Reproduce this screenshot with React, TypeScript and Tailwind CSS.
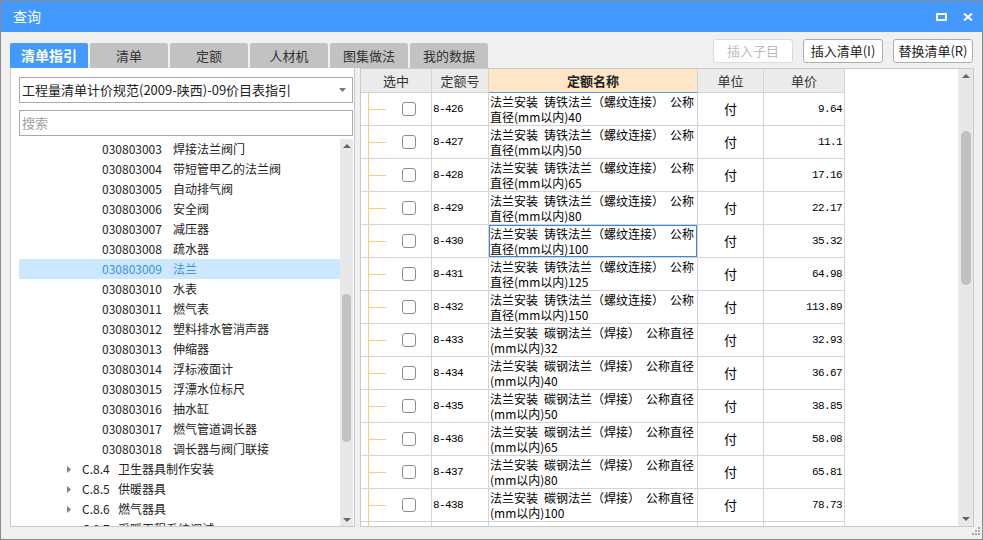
import React from 'react'

interface TreeItem {
  code: string
  name: string
  chapter?: boolean
  selected?: boolean
}

interface Quota {
  no: string
  line1: string
  line2: string
  price: string
  active?: boolean
}

const treeItems: TreeItem[] = [
  { code: '030803003', name: '焊接法兰阀门' },
  { code: '030803004', name: '带短管甲乙的法兰阀' },
  { code: '030803005', name: '自动排气阀' },
  { code: '030803006', name: '安全阀' },
  { code: '030803007', name: '减压器' },
  { code: '030803008', name: '疏水器' },
  { code: '030803009', name: '法兰', selected: true },
  { code: '030803010', name: '水表' },
  { code: '030803011', name: '燃气表' },
  { code: '030803012', name: '塑料排水管消声器' },
  { code: '030803013', name: '伸缩器' },
  { code: '030803014', name: '浮标液面计' },
  { code: '030803015', name: '浮漂水位标尺' },
  { code: '030803016', name: '抽水缸' },
  { code: '030803017', name: '燃气管道调长器' },
  { code: '030803018', name: '调长器与阀门联接' },
  { code: 'C.8.4', name: '卫生器具制作安装', chapter: true },
  { code: 'C.8.5', name: '供暖器具', chapter: true },
  { code: 'C.8.6', name: '燃气器具', chapter: true },
  { code: 'C.8.7', name: '采暖工程系统调试', chapter: true },
]

// en spaces keep the gaps as wide as the half-width blanks of the original
const castIron = '法兰安装\u2002铸铁法兰（螺纹连接）\u2002公称'
const carbon = '法兰安装\u2002碳钢法兰（焊接）\u2002公称直径'

const quotas: Quota[] = [
  { no: '8-426', line1: castIron, line2: '直径(mm以内)40', price: '9.64' },
  { no: '8-427', line1: castIron, line2: '直径(mm以内)50', price: '11.1' },
  { no: '8-428', line1: castIron, line2: '直径(mm以内)65', price: '17.16' },
  { no: '8-429', line1: castIron, line2: '直径(mm以内)80', price: '22.17' },
  { no: '8-430', line1: castIron, line2: '直径(mm以内)100', price: '35.32', active: true },
  { no: '8-431', line1: castIron, line2: '直径(mm以内)125', price: '64.98' },
  { no: '8-432', line1: castIron, line2: '直径(mm以内)150', price: '113.89' },
  { no: '8-433', line1: carbon, line2: '(mm以内)32', price: '32.93' },
  { no: '8-434', line1: carbon, line2: '(mm以内)40', price: '36.67' },
  { no: '8-435', line1: carbon, line2: '(mm以内)50', price: '38.85' },
  { no: '8-436', line1: carbon, line2: '(mm以内)65', price: '58.08' },
  { no: '8-437', line1: carbon, line2: '(mm以内)80', price: '65.81' },
  { no: '8-438', line1: carbon, line2: '(mm以内)100', price: '78.73' },
]

const tabs = ['清单指引', '清单', '定额', '人材机', '图集做法', '我的数据']

function ArrowUp() {
  return (
    <svg width="8" height="4" viewBox="0 0 8 4">
      <path d="M0 4 L4 0 L8 4 Z" fill="#666" />
    </svg>
  )
}

function ArrowDown() {
  return (
    <svg width="8" height="4" viewBox="0 0 8 4">
      <path d="M0 0 L8 0 L4 4 Z" fill="#666" />
    </svg>
  )
}

export default function App() {
  return (
    <div className="w-[983px] h-[540px] flex flex-col border border-[#8a8a8a] bg-[#f0f0f0] overflow-hidden font-['Noto_Sans_CJK_SC',sans-serif] text-[#222]">
      {/* title bar */}
      <div className="h-[31px] shrink-0 bg-[#4499ff] flex items-center justify-between pl-[12px] pr-[9px]">
        <span className="text-[14px] text-white">查询</span>
        <div className="flex items-center gap-[16px]">
          <svg width="11" height="8" viewBox="0 0 11 8">
            <rect x="1" y="1" width="9" height="6" fill="none" stroke="#fff" strokeWidth="2" />
          </svg>
          <svg width="10" height="8" viewBox="0 0 10 8">
            <path d="M1 0.5 L9 7.5 M9 0.5 L1 7.5" stroke="#fff" strokeWidth="2" />
          </svg>
        </div>
      </div>

      <div className="flex-1 flex flex-col pl-[9px] pr-[8px] min-h-0">
        {/* tabs + buttons */}
        <div className="h-[36px] shrink-0 flex justify-between">
          <div className="flex gap-[2px] pt-[11px]">
            {tabs.map((t, i) => (
              <div
                key={t}
                className={
                  i === 0
                    ? 'w-[78px] h-[25px] flex items-center justify-center rounded-t-[2px] bg-[#4499ff] text-white text-[14px] font-bold'
                    : 'w-[78px] h-[25px] flex items-center justify-center rounded-t-[2px] bg-[#c2c2c2] text-[#333] text-[13px]'
                }
              >
                {t}
              </div>
            ))}
          </div>
          <div className="flex gap-[10px] pt-[7px] pr-[1px]">
            <button className="w-[80px] h-[24px] border border-[#dcdcdc] rounded-[3px] bg-white text-[13px] text-[#bdbdbd]">
              插入子目
            </button>
            <button className="w-[80px] h-[24px] border border-[#adadad] rounded-[3px] bg-white text-[13px] text-[#222]">
              插入清单(I)
            </button>
            <button className="w-[80px] h-[24px] border border-[#adadad] rounded-[3px] bg-white text-[13px] text-[#222]">
              替换清单(R)
            </button>
          </div>
        </div>

        {/* panels */}
        <div className="h-[459px] shrink-0 flex gap-[5px]">
          {/* left: guide tree */}
          <div className="w-[345px] bg-white border border-t-0 border-[#c9c9c9] flex flex-col pl-[8px] pr-[1px] pt-[9px]">
            <div className="h-[26px] shrink-0 border border-[#a9a9a9] flex items-center justify-between pl-[2px] pr-[6px] text-[13px]">
              <span>工程量清单计价规范(2009-陕西)-09价目表指引</span>
              <svg width="7" height="4" viewBox="0 0 7 4">
                <path d="M0 0 L7 0 L3.5 4 Z" fill="#777" />
              </svg>
            </div>
            <div className="mt-[7px] h-[26px] shrink-0 border border-[#a9a9a9] flex items-center pl-[2px] text-[13px] text-[#a0a0a0]">
              搜索
            </div>
            <div className="mt-[3px] flex-1 flex min-h-0">
              <div className="flex-1 overflow-hidden">
                {treeItems.map((it) =>
                  it.chapter ? (
                    <div key={it.code} className="h-[20px] flex items-center pl-[48px] text-[12px]">
                      <svg width="4" height="7" viewBox="0 0 4 7">
                        <path d="M0 0 L4 3.5 L0 7 Z" fill="#808080" />
                      </svg>
                      <span className="ml-[11px] w-[36px]">{it.code}</span>
                      <span>{it.name}</span>
                    </div>
                  ) : (
                    <div
                      key={it.code}
                      className={
                        it.selected
                          ? 'h-[20px] flex items-center pl-[83px] text-[12px] bg-[#cce8ff] text-[#3d8fe0]'
                          : 'h-[20px] flex items-center pl-[83px] text-[12px]'
                      }
                    >
                      <span className="w-[71px]">{it.code}</span>
                      <span>{it.name}</span>
                    </div>
                  )
                )}
              </div>
              <div className="w-[13px] bg-[#e8e8e8] flex flex-col items-center">
                <div className="h-[13px] flex items-center">
                  <ArrowUp />
                </div>
                <div className="mt-[142px] w-[9px] h-[148px] rounded-full bg-[#c2c2c2]" />
                <div className="flex-1" />
                <div className="h-[12px] flex items-center">
                  <ArrowDown />
                </div>
              </div>
            </div>
          </div>

          {/* right: quota table */}
          <div className="flex-1 bg-white border border-[#c9c9c9] flex min-w-0">
            <div className="flex-1 overflow-hidden">
              <div className="h-[24px] flex text-[13px] text-[#333]">
                <div className="w-[71px] border-r border-b border-[#d4d4d4] bg-[#ebebeb] flex items-center justify-center">选中</div>
                <div className="w-[57px] border-r border-b border-[#d4d4d4] bg-[#ebebeb] flex items-center justify-center">定额号</div>
                <div className="w-[209px] border-r border-b border-r-[#d4d4d4] border-b-[#5b9be6] bg-[#fee6c7] flex items-center justify-center font-bold text-[#222]">定额名称</div>
                <div className="w-[66px] border-r border-b border-[#d4d4d4] bg-[#ebebeb] flex items-center justify-center">单位</div>
                <div className="w-[81px] border-r border-b border-[#d4d4d4] bg-[#ebebeb] flex items-center justify-center">单价</div>
              </div>
              {quotas.map((q) => (
                <div key={q.no} className="h-[33px] flex text-black">
                  <div className="w-[71px] border-r border-b border-[#d4d4d4] flex items-center">
                    <div className="ml-[7px] h-full w-[18px] border-l border-[#ffcb7d] flex items-center">
                      <div className="h-px w-full bg-[#ffcb7d]" />
                    </div>
                    <div className="ml-[16px] w-[14px] h-[14px] border border-[#8c8c8c] rounded-[3px] bg-white" />
                  </div>
                  <div className="w-[57px] border-r border-b border-[#d4d4d4] flex items-center pl-[1px] font-['Liberation_Mono',monospace] text-[11px] tracking-[-0.6px]">
                    {q.no}
                  </div>
                  <div
                    className={
                      q.active
                        ? 'w-[209px] border-r border-b border-[#d4d4d4] pl-[1px] pt-[1px] text-[12px] leading-[15px] whitespace-nowrap overflow-hidden shadow-[inset_0_0_0_1px_#3a86e8]'
                        : 'w-[209px] border-r border-b border-[#d4d4d4] pl-[1px] pt-[1px] text-[12px] leading-[15px] whitespace-nowrap overflow-hidden'
                    }
                  >
                    <div>{q.line1}</div>
                    <div>{q.line2}</div>
                  </div>
                  <div className="w-[66px] border-r border-b border-[#d4d4d4] flex items-center justify-center text-[13px]">付</div>
                  <div className="w-[81px] border-r border-b border-[#d4d4d4] flex items-center justify-end pr-[2px] font-['Liberation_Mono',monospace] text-[11px] tracking-[-0.6px]">
                    {q.price}
                  </div>
                </div>
              ))}
              {/* next row, only its top edge shows */}
              <div className="h-[33px] flex">
                <div className="w-[71px] border-r border-[#d4d4d4] flex">
                  <div className="ml-[7px] h-full border-l border-[#ffcb7d]" />
                </div>
                <div className="w-[57px] border-r border-[#d4d4d4]" />
                <div className="w-[209px] border-r border-[#d4d4d4]" />
                <div className="w-[66px] border-r border-[#d4d4d4]" />
                <div className="w-[81px] border-r border-[#d4d4d4]" />
              </div>
            </div>
            <div className="w-[15px] bg-[#e8e8e8] flex flex-col items-center">
              <div className="h-[14px] flex items-center">
                <ArrowUp />
              </div>
              <div className="mt-[48px] w-[10px] h-[154px] rounded-full bg-[#c1c1c1]" />
              <div className="flex-1" />
              <div className="h-[14px] flex items-center">
                <ArrowDown />
              </div>
            </div>
          </div>
        </div>
      </div>

      {/* resize grip */}
      <div className="h-[12px] shrink-0 flex justify-end items-start pr-[2px]">
        <svg width="8" height="8" viewBox="0 0 8 8">
          <rect x="6" y="0" width="2" height="2" fill="#a8a8a8" />
          <rect x="3" y="3" width="2" height="2" fill="#a8a8a8" />
          <rect x="6" y="3" width="2" height="2" fill="#a8a8a8" />
          <rect x="0" y="6" width="2" height="2" fill="#a8a8a8" />
          <rect x="3" y="6" width="2" height="2" fill="#a8a8a8" />
          <rect x="6" y="6" width="2" height="2" fill="#a8a8a8" />
        </svg>
      </div>
    </div>
  )
}
